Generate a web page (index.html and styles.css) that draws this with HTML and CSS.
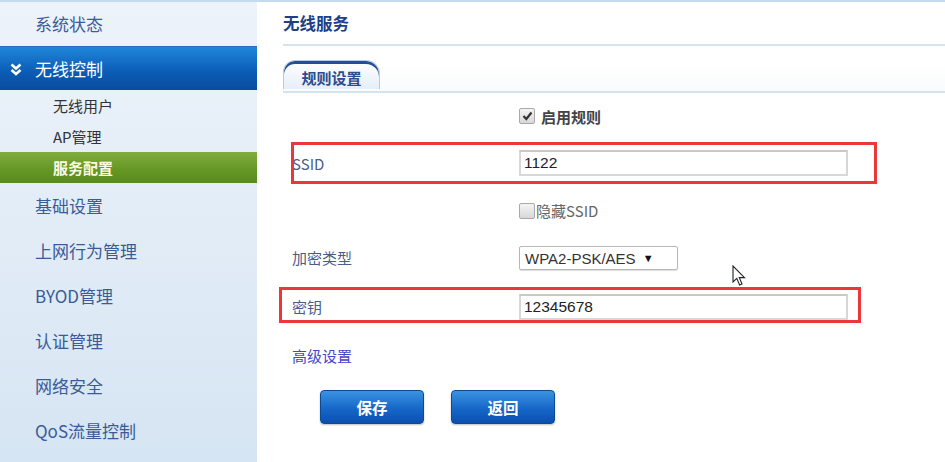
FILE: index.html
```html
<!DOCTYPE html>
<html>
<head>
  <title>无线服务</title>
  <link rel="stylesheet" href="styles.css">
</head>
<body>
  <div class="page">
    <div class="sidebar">
      <div class="nav-item">系统状态</div>
      <div class="nav-item active">
        <svg class="chev" width="12" height="13" viewBox="0 0 12 13">
          <path d="M1.5 1.5 L6 5.5 L10.5 1.5" fill="none" stroke="#fff" stroke-width="2.6"/>
          <path d="M1.5 7 L6 11 L10.5 7" fill="none" stroke="#fff" stroke-width="2.6"/>
        </svg>
        无线控制
      </div>
      <div class="sub-item">无线用户</div>
      <div class="sub-item">AP管理</div>
      <div class="sub-item current">服务配置</div>
      <div class="nav-item">基础设置</div>
      <div class="nav-item">上网行为管理</div>
      <div class="nav-item">BYOD管理</div>
      <div class="nav-item">认证管理</div>
      <div class="nav-item">网络安全</div>
      <div class="nav-item">QoS流量控制</div>
    </div>

    <div class="main">
      <div class="title">无线服务</div>
      <div class="tabs">
        <div class="tab">规则设置</div>
      </div>

      <div class="form">
        <div class="label"></div>
        <div class="field"><span class="cb checked"><svg width="11" height="10" viewBox="0 0 11 10"><path d="M1.5 5 L4.3 8 L9.5 1.5" fill="none" stroke="#333" stroke-width="2.2"/></svg></span><b class="cb-text">启用规则</b></div>

        <div class="label">SSID</div>
        <div class="field"><div class="input">1122</div></div>

        <div class="label"></div>
        <div class="field"><span class="cb"></span><span class="cb-text light">隐藏SSID</span></div>

        <div class="label">加密类型</div>
        <div class="field"><div class="select">WPA2-PSK/AES <span class="arrow">▼</span></div></div>

        <div class="label">密钥</div>
        <div class="field"><div class="input">12345678</div></div>

        <div class="label link">高级设置</div>
        <div class="field"></div>
      </div>

      <div class="actions">
        <button class="btn">保存</button>
        <button class="btn">返回</button>
      </div>
    </div>

    <div class="mark mark-ssid"></div>
    <div class="mark mark-key"></div>

    <svg class="cursor" width="14" height="22" viewBox="0 0 14 22">
      <path d="M1 1 L1 17 L4.8 13.4 L7.6 20 L10 19 L7.3 12.6 L12.5 12.6 Z" fill="#fff" stroke="#222" stroke-width="1.1"/>
    </svg>
  </div>
</body>
</html>
```

FILE: styles.css
```css
body {
  margin: 0;
  font-family: "Noto Sans CJK SC", "Liberation Sans", sans-serif;
  background-color: #fff;
}

.page {
  position: relative;
  display: flex;
  height: 462px;
  border-top: 2px solid #c3dbec;
  box-sizing: border-box;
  overflow: hidden;
}

/* sidebar */

.sidebar {
  width: 257px;
  flex-shrink: 0;
  background: linear-gradient(to bottom, #edf3fa, #d6e5f3);
}

.nav-item {
  height: 45px;
  display: flex;
  align-items: center;
  padding-left: 35px;
  font-size: 17px;
  color: #3b5b98;
  position: relative;
}

.nav-item:first-child {
  height: 43px;
  margin-bottom: 1px;
}

.nav-item.active {
  height: 44px;
  color: #fff;
  background: linear-gradient(to bottom, #1f86d8, #0b5bb5 60%, #0a4c9c);
  border-top: 1px solid #2a6db8;
  box-sizing: border-box;
}

.chev {
  position: absolute;
  left: 10px;
  top: 16px;
}

.sub-item {
  height: 31px;
  display: flex;
  align-items: center;
  padding-left: 53px;
  font-size: 15px;
  color: #333;
}

.sub-item.current {
  height: 31px;
  font-weight: bold;
  color: #fbfbe4;
  background: linear-gradient(to bottom, #80ad3e, #649624 60%, #5a8a1d);
}

/* main */

.main {
  flex: 1;
  padding-left: 26px;
}

.title {
  height: 42px;
  line-height: 42px;
  font-size: 16.5px;
  font-weight: bold;
  color: #1e3f86;
  border-bottom: 2px solid #d5e3f1;
}

.tabs {
  margin-top: 14px;
  border-bottom: 2px solid #d5e3f1;
  height: 31px;
  background: linear-gradient(to bottom, #fff, #fafbfc);
}

.tab {
  width: 95px;
  height: 28px;
  margin-top: 2px;
  border: 1px solid #b5cbe3;
  border-bottom: none;
  border-radius: 12px 14px 0 0;
  background: linear-gradient(to bottom, #fff, #e6eef8);
  box-shadow: inset 0 3px 0 #244f95;
  text-align: center;
  line-height: 33px;
  font-size: 15px;
  font-weight: bold;
  color: #2b4d8e;
}

.form {
  display: grid;
  grid-template-columns: 227px 1fr;
  grid-template-rows: 46px 48px 47px 47px 51px 46px;
  padding-left: 9px;
}

.label {
  display: flex;
  align-items: center;
  font-size: 15px;
  color: #4a5c8c;
}

.label.link {
  color: #4646c6;
}

.field {
  display: flex;
  align-items: center;
}

.cb {
  width: 14px;
  height: 14px;
  border: 1px solid #a9a9a9;
  border-radius: 2px;
  background: linear-gradient(to bottom, #f4f4f4, #d8d8d8);
  display: inline-flex;
  align-items: center;
  justify-content: center;
}

.cb-text {
  margin-left: 6px;
  font-size: 15px;
  color: #444;
}

.cb-text.light {
  margin-left: 1px;
  font-weight: normal;
  color: #666;
}

.input {
  width: 322px;
  height: 22px;
  border: 2px solid #d7d7d7;
  border-top-color: #c8c8c8;
  font-family: "Liberation Sans", sans-serif;
  font-size: 15.5px;
  line-height: 22px;
  padding-left: 3px;
  color: #222;
  background: #fff;
}

.select {
  width: 152px;
  height: 22px;
  border: 1px solid #b8b8b8;
  border-radius: 2px;
  box-shadow: 0 1px 1px #ddd;
  font-family: "Liberation Sans", sans-serif;
  font-size: 15px;
  line-height: 22px;
  padding-left: 5px;
  color: #333;
}

.arrow {
  font-size: 11px;
  margin-left: 3px;
  vertical-align: 2px;
  color: #111;
}

.actions {
  display: flex;
  gap: 27px;
  margin-top: 12px;
  margin-left: 37px;
}

.btn {
  width: 104px;
  height: 34px;
  border: 1px solid #0b4a95;
  border-radius: 4px;
  background: linear-gradient(to bottom, #3a93e0, #1667c8 55%, #0b4fb0);
  color: #fff;
  font-family: "Noto Sans CJK SC", sans-serif;
  font-size: 15.5px;
  font-weight: bold;
  box-shadow: 0 1px 2px rgba(0, 0, 0, 0.25);
}

/* annotation boxes over the form */

.mark {
  position: absolute;
  border: 3px solid #ea373a;
}

.mark-ssid {
  left: 291px;
  top: 140px;
  width: 580px;
  height: 36px;
}

.mark-key {
  left: 279px;
  top: 285px;
  width: 576px;
  height: 30px;
}

.cursor {
  position: absolute;
  left: 732px;
  top: 263px;
}
```
